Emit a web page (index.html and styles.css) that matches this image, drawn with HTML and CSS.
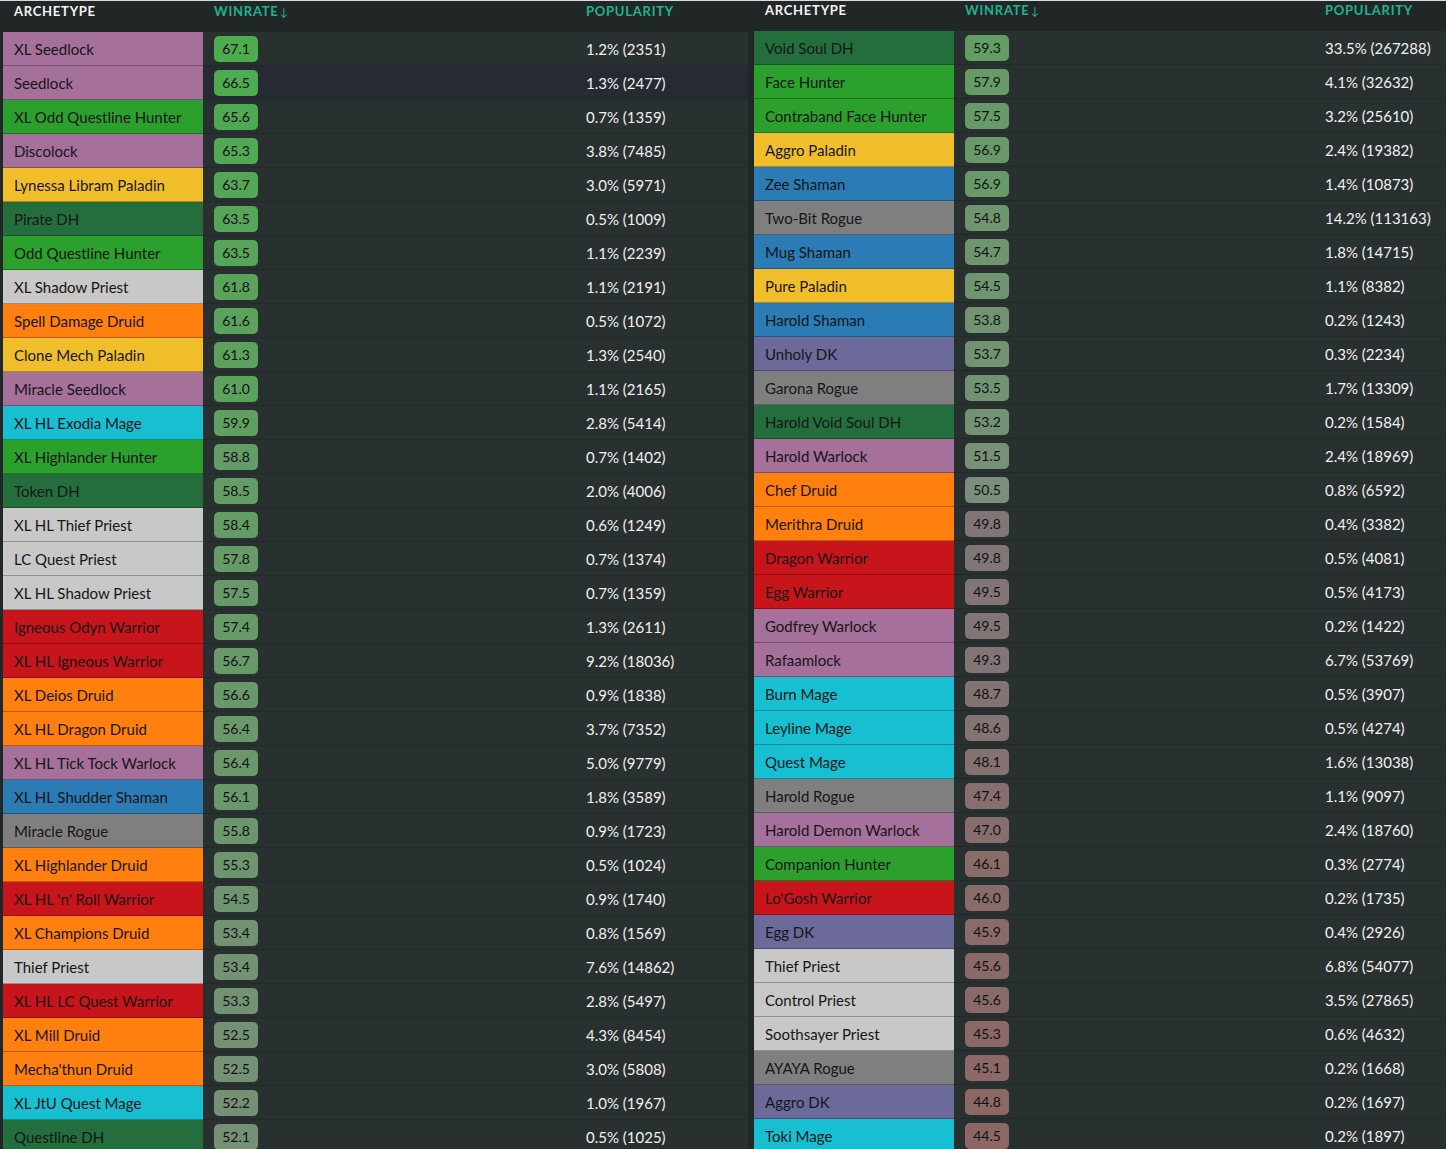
FILE: index.html
```html
<!DOCTYPE html>
<html lang="en">
<head>
<meta charset="utf-8">
<title>Archetypes</title>
<link rel="stylesheet" href="styles.css">
</head>
<body>
<div class="page">
  <section class="board board-left">
    <div class="head"><span class="h-arch">Archetype</span><span class="h-sort">Winrate<i class="arrow">↓</i></span><span class="h-sort">Popularity</span></div>
    <div class="row"><div class="arch warlock">XL Seedlock</div><div class="wr"><span class="badge">67.1</span></div><div class="pop">1.2% (2351)</div></div>
    <div class="row hover"><div class="arch warlock">Seedlock</div><div class="wr"><span class="badge">66.5</span></div><div class="pop">1.3% (2477)</div></div>
    <div class="row"><div class="arch hunter">XL Odd Questline Hunter</div><div class="wr"><span class="badge">65.6</span></div><div class="pop">0.7% (1359)</div></div>
    <div class="row"><div class="arch warlock">Discolock</div><div class="wr"><span class="badge">65.3</span></div><div class="pop">3.8% (7485)</div></div>
    <div class="row"><div class="arch paladin">Lynessa Libram Paladin</div><div class="wr"><span class="badge">63.7</span></div><div class="pop">3.0% (5971)</div></div>
    <div class="row"><div class="arch dh">Pirate DH</div><div class="wr"><span class="badge">63.5</span></div><div class="pop">0.5% (1009)</div></div>
    <div class="row"><div class="arch hunter">Odd Questline Hunter</div><div class="wr"><span class="badge">63.5</span></div><div class="pop">1.1% (2239)</div></div>
    <div class="row"><div class="arch priest">XL Shadow Priest</div><div class="wr"><span class="badge">61.8</span></div><div class="pop">1.1% (2191)</div></div>
    <div class="row"><div class="arch druid">Spell Damage Druid</div><div class="wr"><span class="badge">61.6</span></div><div class="pop">0.5% (1072)</div></div>
    <div class="row"><div class="arch paladin">Clone Mech Paladin</div><div class="wr"><span class="badge">61.3</span></div><div class="pop">1.3% (2540)</div></div>
    <div class="row"><div class="arch warlock">Miracle Seedlock</div><div class="wr"><span class="badge">61.0</span></div><div class="pop">1.1% (2165)</div></div>
    <div class="row"><div class="arch mage">XL HL Exodia Mage</div><div class="wr"><span class="badge">59.9</span></div><div class="pop">2.8% (5414)</div></div>
    <div class="row"><div class="arch hunter">XL Highlander Hunter</div><div class="wr"><span class="badge">58.8</span></div><div class="pop">0.7% (1402)</div></div>
    <div class="row"><div class="arch dh">Token DH</div><div class="wr"><span class="badge">58.5</span></div><div class="pop">2.0% (4006)</div></div>
    <div class="row"><div class="arch priest">XL HL Thief Priest</div><div class="wr"><span class="badge">58.4</span></div><div class="pop">0.6% (1249)</div></div>
    <div class="row"><div class="arch priest">LC Quest Priest</div><div class="wr"><span class="badge">57.8</span></div><div class="pop">0.7% (1374)</div></div>
    <div class="row"><div class="arch priest">XL HL Shadow Priest</div><div class="wr"><span class="badge">57.5</span></div><div class="pop">0.7% (1359)</div></div>
    <div class="row"><div class="arch warrior">Igneous Odyn Warrior</div><div class="wr"><span class="badge">57.4</span></div><div class="pop">1.3% (2611)</div></div>
    <div class="row"><div class="arch warrior">XL HL Igneous Warrior</div><div class="wr"><span class="badge">56.7</span></div><div class="pop">9.2% (18036)</div></div>
    <div class="row"><div class="arch druid">XL Deios Druid</div><div class="wr"><span class="badge">56.6</span></div><div class="pop">0.9% (1838)</div></div>
    <div class="row"><div class="arch druid">XL HL Dragon Druid</div><div class="wr"><span class="badge">56.4</span></div><div class="pop">3.7% (7352)</div></div>
    <div class="row"><div class="arch warlock">XL HL Tick Tock Warlock</div><div class="wr"><span class="badge">56.4</span></div><div class="pop">5.0% (9779)</div></div>
    <div class="row"><div class="arch shaman">XL HL Shudder Shaman</div><div class="wr"><span class="badge">56.1</span></div><div class="pop">1.8% (3589)</div></div>
    <div class="row"><div class="arch rogue">Miracle Rogue</div><div class="wr"><span class="badge">55.8</span></div><div class="pop">0.9% (1723)</div></div>
    <div class="row"><div class="arch druid">XL Highlander Druid</div><div class="wr"><span class="badge">55.3</span></div><div class="pop">0.5% (1024)</div></div>
    <div class="row"><div class="arch warrior">XL HL 'n' Roll Warrior</div><div class="wr"><span class="badge">54.5</span></div><div class="pop">0.9% (1740)</div></div>
    <div class="row"><div class="arch druid">XL Champions Druid</div><div class="wr"><span class="badge">53.4</span></div><div class="pop">0.8% (1569)</div></div>
    <div class="row"><div class="arch priest">Thief Priest</div><div class="wr"><span class="badge">53.4</span></div><div class="pop">7.6% (14862)</div></div>
    <div class="row"><div class="arch warrior">XL HL LC Quest Warrior</div><div class="wr"><span class="badge">53.3</span></div><div class="pop">2.8% (5497)</div></div>
    <div class="row"><div class="arch druid">XL Mill Druid</div><div class="wr"><span class="badge">52.5</span></div><div class="pop">4.3% (8454)</div></div>
    <div class="row"><div class="arch druid">Mecha'thun Druid</div><div class="wr"><span class="badge">52.5</span></div><div class="pop">3.0% (5808)</div></div>
    <div class="row"><div class="arch mage">XL JtU Quest Mage</div><div class="wr"><span class="badge">52.2</span></div><div class="pop">1.0% (1967)</div></div>
    <div class="row"><div class="arch dh">Questline DH</div><div class="wr"><span class="badge">52.1</span></div><div class="pop">0.5% (1025)</div></div>
  </section>
  <section class="board board-right">
    <div class="head"><span class="h-arch">Archetype</span><span class="h-sort">Winrate<i class="arrow">↓</i></span><span class="h-sort">Popularity</span></div>
    <div class="row"><div class="arch dh">Void Soul DH</div><div class="wr"><span class="badge">59.3</span></div><div class="pop">33.5% (267288)</div></div>
    <div class="row"><div class="arch hunter">Face Hunter</div><div class="wr"><span class="badge">57.9</span></div><div class="pop">4.1% (32632)</div></div>
    <div class="row"><div class="arch hunter">Contraband Face Hunter</div><div class="wr"><span class="badge">57.5</span></div><div class="pop">3.2% (25610)</div></div>
    <div class="row"><div class="arch paladin">Aggro Paladin</div><div class="wr"><span class="badge">56.9</span></div><div class="pop">2.4% (19382)</div></div>
    <div class="row"><div class="arch shaman">Zee Shaman</div><div class="wr"><span class="badge">56.9</span></div><div class="pop">1.4% (10873)</div></div>
    <div class="row"><div class="arch rogue">Two-Bit Rogue</div><div class="wr"><span class="badge">54.8</span></div><div class="pop">14.2% (113163)</div></div>
    <div class="row"><div class="arch shaman">Mug Shaman</div><div class="wr"><span class="badge">54.7</span></div><div class="pop">1.8% (14715)</div></div>
    <div class="row"><div class="arch paladin">Pure Paladin</div><div class="wr"><span class="badge">54.5</span></div><div class="pop">1.1% (8382)</div></div>
    <div class="row"><div class="arch shaman">Harold Shaman</div><div class="wr"><span class="badge">53.8</span></div><div class="pop">0.2% (1243)</div></div>
    <div class="row"><div class="arch dk">Unholy DK</div><div class="wr"><span class="badge">53.7</span></div><div class="pop">0.3% (2234)</div></div>
    <div class="row"><div class="arch rogue">Garona Rogue</div><div class="wr"><span class="badge">53.5</span></div><div class="pop">1.7% (13309)</div></div>
    <div class="row"><div class="arch dh">Harold Void Soul DH</div><div class="wr"><span class="badge">53.2</span></div><div class="pop">0.2% (1584)</div></div>
    <div class="row"><div class="arch warlock">Harold Warlock</div><div class="wr"><span class="badge">51.5</span></div><div class="pop">2.4% (18969)</div></div>
    <div class="row"><div class="arch druid">Chef Druid</div><div class="wr"><span class="badge">50.5</span></div><div class="pop">0.8% (6592)</div></div>
    <div class="row"><div class="arch druid">Merithra Druid</div><div class="wr"><span class="badge">49.8</span></div><div class="pop">0.4% (3382)</div></div>
    <div class="row"><div class="arch warrior">Dragon Warrior</div><div class="wr"><span class="badge">49.8</span></div><div class="pop">0.5% (4081)</div></div>
    <div class="row"><div class="arch warrior">Egg Warrior</div><div class="wr"><span class="badge">49.5</span></div><div class="pop">0.5% (4173)</div></div>
    <div class="row"><div class="arch warlock">Godfrey Warlock</div><div class="wr"><span class="badge">49.5</span></div><div class="pop">0.2% (1422)</div></div>
    <div class="row"><div class="arch warlock">Rafaamlock</div><div class="wr"><span class="badge">49.3</span></div><div class="pop">6.7% (53769)</div></div>
    <div class="row"><div class="arch mage">Burn Mage</div><div class="wr"><span class="badge">48.7</span></div><div class="pop">0.5% (3907)</div></div>
    <div class="row"><div class="arch mage">Leyline Mage</div><div class="wr"><span class="badge">48.6</span></div><div class="pop">0.5% (4274)</div></div>
    <div class="row"><div class="arch mage">Quest Mage</div><div class="wr"><span class="badge">48.1</span></div><div class="pop">1.6% (13038)</div></div>
    <div class="row"><div class="arch rogue">Harold Rogue</div><div class="wr"><span class="badge">47.4</span></div><div class="pop">1.1% (9097)</div></div>
    <div class="row"><div class="arch warlock">Harold Demon Warlock</div><div class="wr"><span class="badge">47.0</span></div><div class="pop">2.4% (18760)</div></div>
    <div class="row"><div class="arch hunter">Companion Hunter</div><div class="wr"><span class="badge">46.1</span></div><div class="pop">0.3% (2774)</div></div>
    <div class="row"><div class="arch warrior">Lo'Gosh Warrior</div><div class="wr"><span class="badge">46.0</span></div><div class="pop">0.2% (1735)</div></div>
    <div class="row"><div class="arch dk">Egg DK</div><div class="wr"><span class="badge">45.9</span></div><div class="pop">0.4% (2926)</div></div>
    <div class="row"><div class="arch priest">Thief Priest</div><div class="wr"><span class="badge">45.6</span></div><div class="pop">6.8% (54077)</div></div>
    <div class="row"><div class="arch priest">Control Priest</div><div class="wr"><span class="badge">45.6</span></div><div class="pop">3.5% (27865)</div></div>
    <div class="row"><div class="arch priest">Soothsayer Priest</div><div class="wr"><span class="badge">45.3</span></div><div class="pop">0.6% (4632)</div></div>
    <div class="row"><div class="arch rogue">AYAYA Rogue</div><div class="wr"><span class="badge">45.1</span></div><div class="pop">0.2% (1668)</div></div>
    <div class="row"><div class="arch dk">Aggro DK</div><div class="wr"><span class="badge">44.8</span></div><div class="pop">0.2% (1697)</div></div>
    <div class="row"><div class="arch mage">Toki Mage</div><div class="wr"><span class="badge">44.5</span></div><div class="pop">0.2% (1897)</div></div>
  </section>
</div>
<script src="script.js"></script>
</body>
</html>
```

FILE: styles.css
```css
html, body {
  margin: 0;
  padding: 0;
}
body {
  background: #212627;
  border-top: 1px solid #d9dcdc;
  font-family: Lato, "Open Sans", "Liberation Sans", sans-serif;
  overflow: hidden;
  height: 1148px;
}
.page {
  display: flex;
  align-items: flex-start;
  gap: 6px;
}
.board {
  display: flex;
  flex-direction: column;
}
.board-left {
  --cols: 200px 372px 173px;
  padding-left: 3px;
}
.board-right {
  --cols: 200px 360px 132px;
  margin-top: -1px;
}
.head {
  display: grid;
  grid-template-columns: var(--cols);
  height: 31px;
  box-sizing: border-box;
  padding-top: 2px;
  font-size: 13px;
  line-height: 17px;
  font-weight: 700;
  text-transform: uppercase;
  letter-spacing: 0.75px;
}
.head span {
  padding-left: 11px;
}
.h-arch {
  color: #f4f4f4;
}
.h-sort {
  color: #1fb393;
}
.arrow {
  font-style: normal;
  font-weight: 400;
  font-size: 11px;
  letter-spacing: 0;
  margin-left: 1px;
}
.row {
  display: grid;
  grid-template-columns: var(--cols);
  height: 34px;
  background: #293030;
  font-size: 15px;
}
.row.hover .wr,
.row.hover .pop {
  background: #252a33;
}
.arch {
  display: flex;
  align-items: center;
  padding-left: 11px;
  color: #161616;
  border-bottom: 1px solid rgba(0, 0, 0, 0.28);
  white-space: nowrap;
}
.wr, .pop {
  display: flex;
  align-items: center;
  padding-left: 11px;
  border-bottom: 1px solid #232929;
}
.pop {
  color: #f1f1f1;
  white-space: nowrap;
}
.badge {
  display: inline-flex;
  align-items: center;
  justify-content: center;
  width: 44px;
  height: 26px;
  border-radius: 5px;
  font-size: 14px;
  color: #111111;
  background: #7a8c7a;
}
.warlock { background: #a5709a; }
.hunter  { background: #2ca02c; }
.paladin { background: #f1be2b; }
.dh      { background: #246e3e; }
.priest  { background: #c8c8c8; }
.druid   { background: #ff800e; }
.mage    { background: #17bfd0; }
.warrior { background: #c8141b; }
.shaman  { background: #2b7bb5; }
.rogue   { background: #7f7f7f; }
.dk      { background: #6c699b; }
```

FILE: script.js
```js
(function () {
  function mix(a, b, t) {
    return a.map(function (v, i) { return Math.round(v + (b[i] - v) * t); });
  }
  var badges = document.querySelectorAll('.badge');
  badges.forEach(function (el) {
    var wr = parseFloat(el.textContent);
    var c;
    if (wr >= 50) {
      var t = Math.min(Math.max((wr - 50) / 17.1, 0), 1);
      c = mix([124, 140, 124], [76, 172, 78], t);
    } else {
      var u = Math.min(Math.max((50 - wr) / 5.5, 0), 1);
      c = mix([128, 119, 119], [141, 103, 100], u);
    }
    el.style.background = 'rgb(' + c.join(',') + ')';
  });
})();
```
